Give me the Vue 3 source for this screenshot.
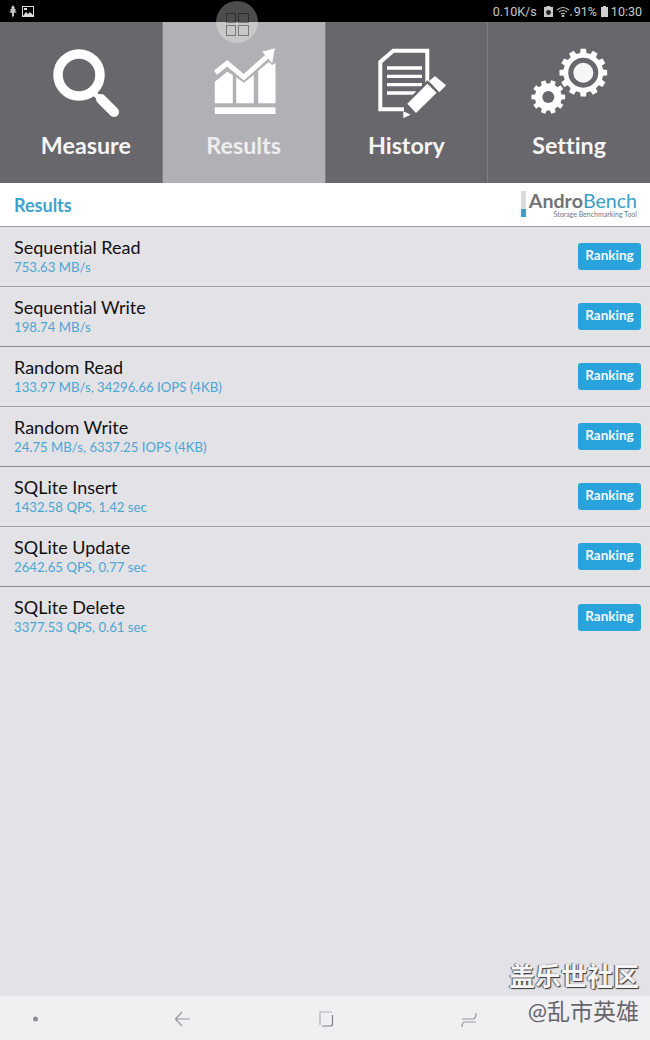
<template>
  <div class="screen">
    <div class="status">
      <div class="status-left">
        <svg width="10" height="12" viewBox="0 0 10 12"><path d="M5 0 7 3 6 4 8 4 7 6 9 7 6 8 6 11 4 12 4 8 1 7 3 6 2 4 4 4 3 3Z" fill="#c4c4c4" /></svg>
        <svg width="12" height="11" viewBox="0 0 12 11"><rect x="0.5" y="0.5" width="11" height="10" fill="none" stroke="#ddd" /><path d="M1 10 4 6 6 8 8 6 11 9V10Z" fill="#ddd" /><rect x="2" y="2" width="3" height="2" fill="#ddd" /></svg>
      </div>
      <div class="status-right">
        <span>0.10K/s</span>
        <svg class="st-save" width="9" height="11" viewBox="0 0 9 11"><path d="M2.500 0H6.500V1H9V11H0V1H2.500Z" fill="#c8c8c8" /><circle cx="4.500" cy="6.500" r="2.400" fill="#222" /></svg>
        <svg class="st-wifi" width="16" height="11" viewBox="0 0 16 11" fill="none" stroke="#c4c4c4" stroke-width="1.100"><path d="M1 4Q7-1 13 4M3 6Q7 3 11 6M5 8Q7 6.500 9 8" /><circle cx="7" cy="10" r="0.800" fill="#c4c4c4" /><path d="M15 8V10" /></svg>
        <span>91%</span>
        <svg class="st-batt" width="7" height="11" viewBox="0 0 7 11"><path d="M2 0H5V1H7V11H0V1H2Z" fill="#d0d0d0" /></svg>
        <span>10:30</span>
      </div>
    </div>

    <div class="tabs">
      <div class="tab first">
        <svg class="tab-icon" viewBox="0 0 80 72">
          <circle cx="38" cy="27" r="21" fill="none" stroke="#fff" stroke-width="9.500" />
          <path d="M50 42 58 50" stroke="#fff" stroke-width="5" />
          <path d="M60 51 73 64" stroke="#fff" stroke-width="10" stroke-linecap="round" />
        </svg>
        <div class="tab-label">Measure</div>
      </div>
      <div class="tab active">
        <svg class="tab-icon" viewBox="0 0 80 72" fill="#fff">
          <rect x="10.800" y="59.300" width="60.700" height="6.700" />
          <path d="M10.800 33.700 23.200 23.700 28.800 27V55.300H10.800Z" />
          <path d="M32.200 29.300 39.800 34.700 49.800 27V55.300H32.200Z" />
          <path d="M54.200 22.700 64.800 14 68 17 71.500 15V55.300H54.200Z" />
          <path d="M11.500 24.700 23.200 15.300 39.800 29.300 64.800 7" fill="none" stroke="#fff" stroke-width="5" />
          <path d="M58.200 3.700 70.800 0.300 68.200 15.300Z" />
        </svg>
        <div class="tab-label">Results</div>
      </div>
      <div class="tab">
        <svg class="tab-icon" viewBox="0 0 80 72">
          <path d="M61.300 37V2.700H27.300L14.300 14V61.300H38" fill="none" stroke="#fff" stroke-width="4" />
          <path d="M21 20H56M21 28.300H56M21 36.700H56M21 45H56" stroke="#fff" stroke-width="3.300" />
          <path d="M41.300 55.700 61.300 35.700 70.700 44.700 50 65Z" fill="#fff" stroke="#68676b" stroke-width="5" paint-order="stroke" />
          <path d="M64 33.300 69 29 79 37.300 73.300 43.300Z" fill="#fff" stroke="#fff" stroke-width="1.500" stroke-linejoin="round" />
          <path d="M37.300 70V63.300L44.700 66.700Z" fill="#fff" />
        </svg>
        <div class="tab-label">History</div>
      </div>
      <div class="tab">
        <svg class="tab-icon" viewBox="0 0 80 72">
          <path :d="gearPath(54.3, 24.7, 12, 20, 24)" fill="#fff" />
          <circle cx="54.300" cy="24.700" r="12.500" fill="#f6f6f6" stroke="#68676b" stroke-width="5" />
          <path :d="gearPath(19.3, 49, 10, 13.5, 17)" fill="#fff" />
          <circle cx="19.300" cy="49" r="6" fill="#68676b" />
        </svg>
        <div class="tab-label">Setting</div>
      </div>
    </div>

    <div class="header">
      <div class="header-title">Results</div>
      <div class="logo">
        <div class="logo-bar"><div class="logo-bar-fill"></div></div>
        <div class="logo-text">
          <div class="logo-name"><b>Andro</b><span>Bench</span></div>
          <div class="logo-sub">Storage Benchmarking Tool</div>
        </div>
      </div>
    </div>

    <div class="list">
      <div v-for="r in results" :key="r.name" class="row">
        <div class="row-text">
          <div class="row-name">{{ r.name }}</div>
          <div class="row-value">{{ r.value }}</div>
        </div>
        <button class="rank-btn">Ranking</button>
      </div>
    </div>

    <div class="nav">
      <svg width="650" height="44" viewBox="0 0 650 44" fill="none" stroke="#98989c" stroke-width="1.200">
        <circle cx="35.500" cy="23" r="2.500" fill="#8e8e92" stroke="none" />
        <path d="M190 23H176M182 16 175.500 23 182 30" />
        <path d="M320 29V16H332" stroke="#b0b0b4" />
        <path d="M332.500 19V28Q332.500 30 330.500 30H322" stroke="#808084" />
        <path d="M462 23H473Q476 23 476 17M476 26H465Q462 26 462 31" />
      </svg>
    </div>

    <div class="bubble">
      <div class="bubble-grid"><i></i><i></i><i></i><i></i></div>
    </div>
    <div class="mark mark-1">盖乐世社区</div>
    <div class="mark mark-2">@乱市英雄</div>
  </div>
</template>

<script setup>
const results = [
  { name: 'Sequential Read', value: '753.63 MB/s' },
  { name: 'Sequential Write', value: '198.74 MB/s' },
  { name: 'Random Read', value: '133.97 MB/s, 34296.66 IOPS (4KB)' },
  { name: 'Random Write', value: '24.75 MB/s, 6337.25 IOPS (4KB)' },
  { name: 'SQLite Insert', value: '1432.58 QPS, 1.42 sec' },
  { name: 'SQLite Update', value: '2642.65 QPS, 0.77 sec' },
  { name: 'SQLite Delete', value: '3377.53 QPS, 0.61 sec' }
]

// cog outline: n square teeth between radius r1 and r2
function gearPath(cx, cy, n, r1, r2) {
  const pts = []
  const step = (Math.PI * 2) / n
  for (let i = 0; i < n; i++) {
    const a = i * step
    const corners = [[r1, -0.3], [r2, -0.22], [r2, 0.22], [r1, 0.3]]
    for (const [r, k] of corners) {
      const t = a + k * step
      pts.push((cx + r * Math.cos(t)).toFixed(2) + ' ' + (cy + r * Math.sin(t)).toFixed(2))
    }
  }
  return 'M' + pts.join('L') + 'Z'
}
</script>

<style scoped>
.screen {
  position: relative; width: 650px; height: 1040px; overflow: hidden;
  display: flex; flex-direction: column; background: #e3e2e6;
  font-family: Lato, "Noto Sans CJK SC", sans-serif; font-variant-ligatures: none;
}
.status {
  height: 22px; background: #000; display: flex; justify-content: space-between; align-items: center;
  padding: 0 8px; color: #c8c8c8; font-size: 12.500px; font-family: Roboto, sans-serif;
}
.status-left { display: flex; align-items: center; gap: 4px; }
.status-right { display: flex; align-items: center; }
.st-save { margin: 0 3px 0 7px; }
.st-wifi { margin-right: 2px; }
.st-batt { margin: 0 3px 0 4px; }
.tabs { height: 161px; display: flex; gap: 1px; background: #7f7e82; }
.tab { flex: 1; background: #68676b; display: flex; flex-direction: column; align-items: center; padding-top: 26px; }
.tab.active { background: #b1b0b4; }
.tab-icon { width: 80px; height: 72px; }
.tab-label { margin-top: 10px; color: #f5f5f5; font-size: 23.300px; font-weight: 700; line-height: 30px; }
.tab.first .tab-label { margin-left: 10px; }
.tab.active .tab-label { color: #eeeeee; }
.header {
  height: 44px; box-sizing: border-box; background: #fff; border-bottom: 1px solid #98979b;
  display: flex; justify-content: space-between; align-items: center; padding: 0 13px 0 14px;
}
.header-title { color: #3ea3cf; font-size: 18px; font-weight: 700; }
.logo { display: flex; gap: 3px; align-items: stretch; }
.logo-bar { width: 5px; height: 26px; background: #dcdcdc; position: relative; }
.logo-bar-fill { position: absolute; left: 0; right: 0; bottom: 0; height: 8px; background: #39a0cf; }
.logo-text { display: flex; flex-direction: column; align-items: flex-end; }
.logo-name { font-size: 19.600px; line-height: 19px; color: #38a0c6; }
.logo-name b { color: #737276; font-weight: 700; }
.logo-sub { font-size: 7px; line-height: 8px; color: #77767a; }
.list { flex: 1; }
.row {
  height: 60px; box-sizing: border-box; border-bottom: 1px solid #a3a2a6;
  display: flex; justify-content: space-between; align-items: center; padding: 0 9px 0 14px;
}
.row:last-child { border-bottom: none; }
.row:nth-child(even) { border-bottom-color: #8a898d; }
.row-name { font-size: 18px; line-height: 21px; color: #111; }
.row-value { font-size: 13.200px; line-height: 19px; color: #4ba6d2; }
.rank-btn {
  width: 63px; height: 27px; border: none; border-radius: 3px; padding: 0 0 3px; background: #29a3dc;
  color: #f2f8fb; font-family: inherit; font-size: 13.500px; font-weight: 700;
}
.nav { height: 44px; background: #f0eff2; }
.nav svg { display: block; }
.bubble {
  position: absolute; left: 216px; top: 1px; width: 42px; height: 42px; border-radius: 50%;
  background: rgba(255, 255, 255, 0.3); display: flex; align-items: center; justify-content: center;
  box-sizing: border-box; padding-top: 4px;
}
.bubble-grid { display: grid; grid-template-columns: 10.500px 10.500px; gap: 2px; }
.bubble-grid i { display: block; height: 10.500px; border: 1.500px solid rgba(0, 0, 0, 0.4); box-sizing: border-box; }
.mark { position: absolute; right: 11px; line-height: 1; white-space: nowrap; }
.mark-1 { top: 963px; font-size: 26px; font-weight: 700; color: #f4f4f4; text-shadow: 1px 1px 1px #333, -1px 0 1px #555; }
.mark-2 { top: 1000px; font-size: 23px; color: #66666a; }
</style>
